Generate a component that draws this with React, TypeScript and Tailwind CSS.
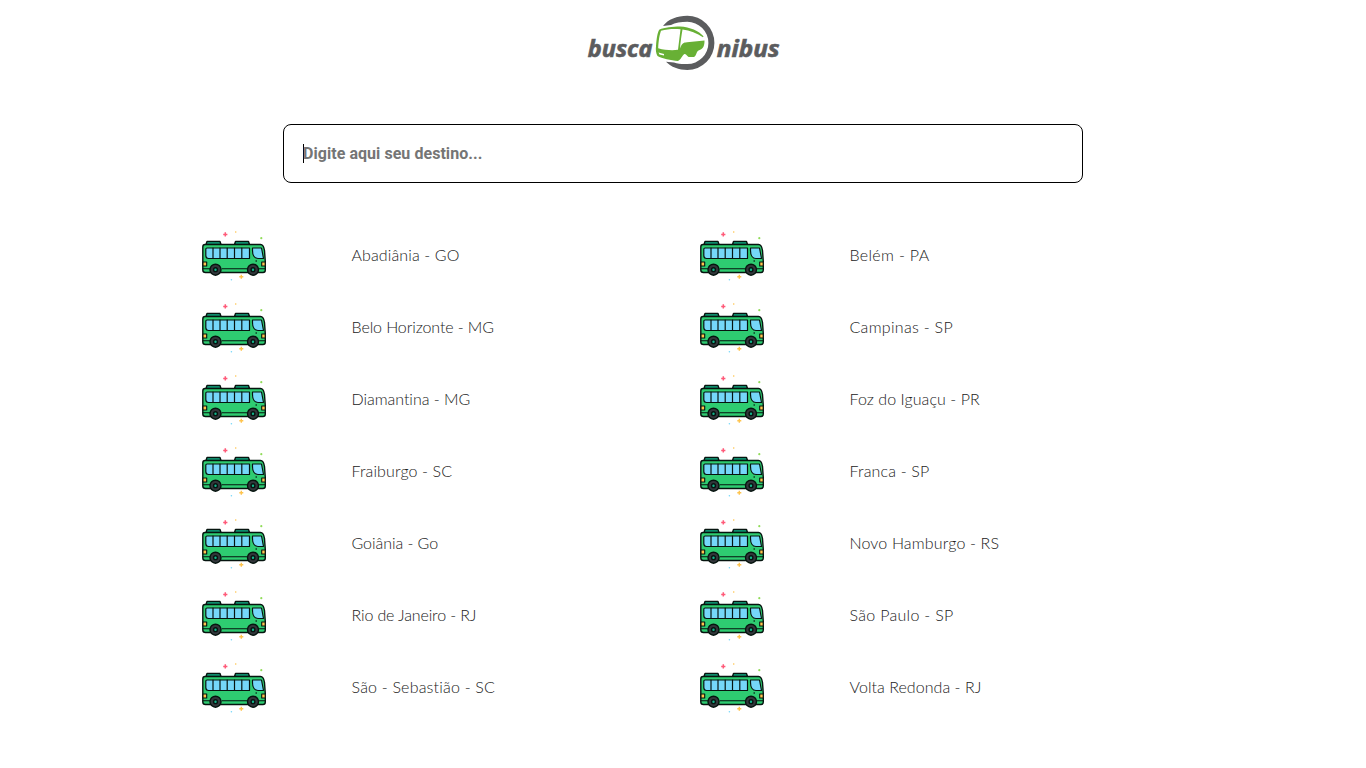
const left = [
  ["Abadiânia - GO", "tracking-[0.12px]"],
  ["Belo Horizonte - MG", "tracking-[-0.1px]"],
  ["Diamantina - MG", "tracking-[-0.03px]"],
  ["Fraiburgo - SC", "tracking-[0.12px]"],
  ["Goiânia - Go", "tracking-[-0.05px]"],
  ["Rio de Janeiro - RJ", "tracking-[-0.13px]"],
  ["São - Sebastião - SC", "tracking-[0.2px]"],
];
const right = [
  ["Belém - PA", "tracking-[0.33px]"],
  ["Campinas - SP", "tracking-[0.3px]"],
  ["Foz do Iguaçu - PR", "tracking-[0.06px]"],
  ["Franca - SP", "tracking-[0.18px]"],
  ["Novo Hamburgo - RS", "tracking-[0.15px]"],
  ["São Paulo - SP", "tracking-[0.3px]"],
  ["Volta Redonda - RJ", "tracking-[0.05px]"],
];

function Logo() {
  return (
    <svg width="196" height="60" viewBox="585 12 196 60" className="block">
      <g fill="#5b5c5e" fontFamily="'Noto Sans', 'Open Sans', sans-serif" fontWeight="700" fontStyle="italic" fontSize="22.5" stroke="#5b5c5e" strokeWidth=".6">
        <text x="587.8" y="57.400" textLength="64.500" lengthAdjust="spacingAndGlyphs">busca</text>
        <text x="716.8" y="57.400" textLength="62.700" lengthAdjust="spacingAndGlyphs">nibus</text>
      </g>
      <path fill="#5b5c5e" d="M663 26C668 19.500 677 15.800 687.300 15.800A27.100 27.100 0 0 1 687.300 70C679 70 671 67 666 61.800L674 62.500C678 64 683 64.200 687.300 64A21.100 21.100 0 0 0 687.300 21.800C681 21.800 675 23 671 25Z" />
      <path fill="#68b035" fillRule="evenodd" d="M656 46C656.600 38 657.500 32 659.500 29.500C664 27.500 673 26.500 680 26.500C690 27 699 31 703.500 36.300L703 37.200C697 33.500 690 30.500 682.500 29.500C681.500 35 680.500 42 680 48.500C682 43 683.500 42.500 687 42.200L704.500 40.600C704.500 46 703.500 49 698.500 50.500C696.500 51.500 696 56.500 694 57H689.500C687 57 686.500 53.500 684.500 54C682.500 55 681 59.500 678 61C671 60.500 662 58.500 657.500 56C656 53.500 655.500 50 656 46ZM658.200 48.200C665 50.200 672 50.500 678 49.800L680.500 29.200C674 28.500 667 29 661 30.700C659.500 35 658.600 40 658.200 48.200ZM658.500 52.500L664 54L664 55.600L659.500 54.500Z" />
    </svg>
  );
}

function Bus() {
  return (
    <svg width="64" height="64" viewBox="0 0 64 64" className="block translate-y-[3.500px]">
      <g stroke="#06140f" strokeWidth="1.400" strokeLinejoin="round" strokeLinecap="round">
        <path fill="#12b38b" d="M4 17L5 14H18L19 17ZM32.500 17L33.500 14H46.500L47.500 17Z" />
        <path fill="#2ecc71" d="M3 17H58.500C61 17 62 19.500 62.500 23L63.300 34V42.500C63.300 44.300 62.500 45 61 45H3.500C1.500 45 .8 44.300 .8 42.500V19.500C.8 17.700 1.500 17 3 17Z" />
        <path fill="#75d7f9" strokeWidth="1.200" d="M5 20.500H47.500V31H6.500Q3.800 31 3.800 28V21.700Q3.800 20.500 5 20.500ZM50.500 20.500H59.500L61.500 31H56C52.500 31 50.500 27.500 50.500 23Z" />
        <path strokeWidth="1.200" d="M11 20.500V31M18 20.500V31M25.200 20.500V31M32.500 20.500V31M39.800 20.500V31" />
        <path fill="#ffc44d" strokeWidth="1.100" d="M1 34.500H4.700V38.500H1ZM59.700 34.500H63.200V38.500H59.700Z" />
        <path strokeWidth="1.100" d="M1 41.300H8M20 41.300H45M57 41.300H63" />
        <circle cx="13.500" cy="42.200" r="5.500" fill="#33363b" />
        <circle cx="51" cy="42.200" r="5.500" fill="#33363b" />
        <circle cx="13.500" cy="42.200" r="1.900" fill="#12b38b" />
        <circle cx="51" cy="42.200" r="1.900" fill="#12b38b" />
      </g>
      <circle cx="54.200" cy="33.500" r=".8" fill="#06140f" />
      <path stroke="#ff5a79" strokeWidth="1.500" d="M23.300 4.800V9M21.200 6.900H25.400" />
      <path stroke="#ffc44d" strokeWidth="1.400" d="M39.300 47.300V51.300M37.300 49.300H41.300" />
      <circle cx="33.700" cy="4.500" r=".8" fill="#ffc44d" />
      <circle cx="59.300" cy="10.700" r="1.100" fill="#91dc5a" />
      <circle cx="29.400" cy="52.300" r=".8" fill="#75d7f9" />
    </svg>
  );
}

function Column({ items }: { items: string[][] }) {
  return (
    <ul className="w-[498px]">
      {items.map(([name, tracking]) => (
        <li key={name} className="flex h-[72px] items-center">
          <Bus />
          <span className={`mb-[2px] ml-[85.500px] whitespace-nowrap text-[16px] leading-6 font-light text-[#222] [font-variant-ligatures:none] ${tracking}`}>{name}</span>
        </li>
      ))}
    </ul>
  );
}

export default function App() {
  return (
    <main className="flex h-screen flex-col items-center overflow-hidden bg-white pt-3 font-['Lato','Open_Sans',sans-serif]">
      <Logo />
      <div className="mt-[52px] flex h-[59px] w-[800px] items-center rounded-lg border border-black pl-[19px] font-['Roboto',sans-serif] text-[16px] font-bold text-[#757575]">
        <span className="h-[19px] w-px bg-black" />
        <span className="-ml-px tracking-[0.05px]">Digite aqui seu destino...</span>
      </div>
      <div className="mt-[37px] flex w-full pl-[202px]">
        <Column items={left} />
        <Column items={right} />
      </div>
    </main>
  );
}
